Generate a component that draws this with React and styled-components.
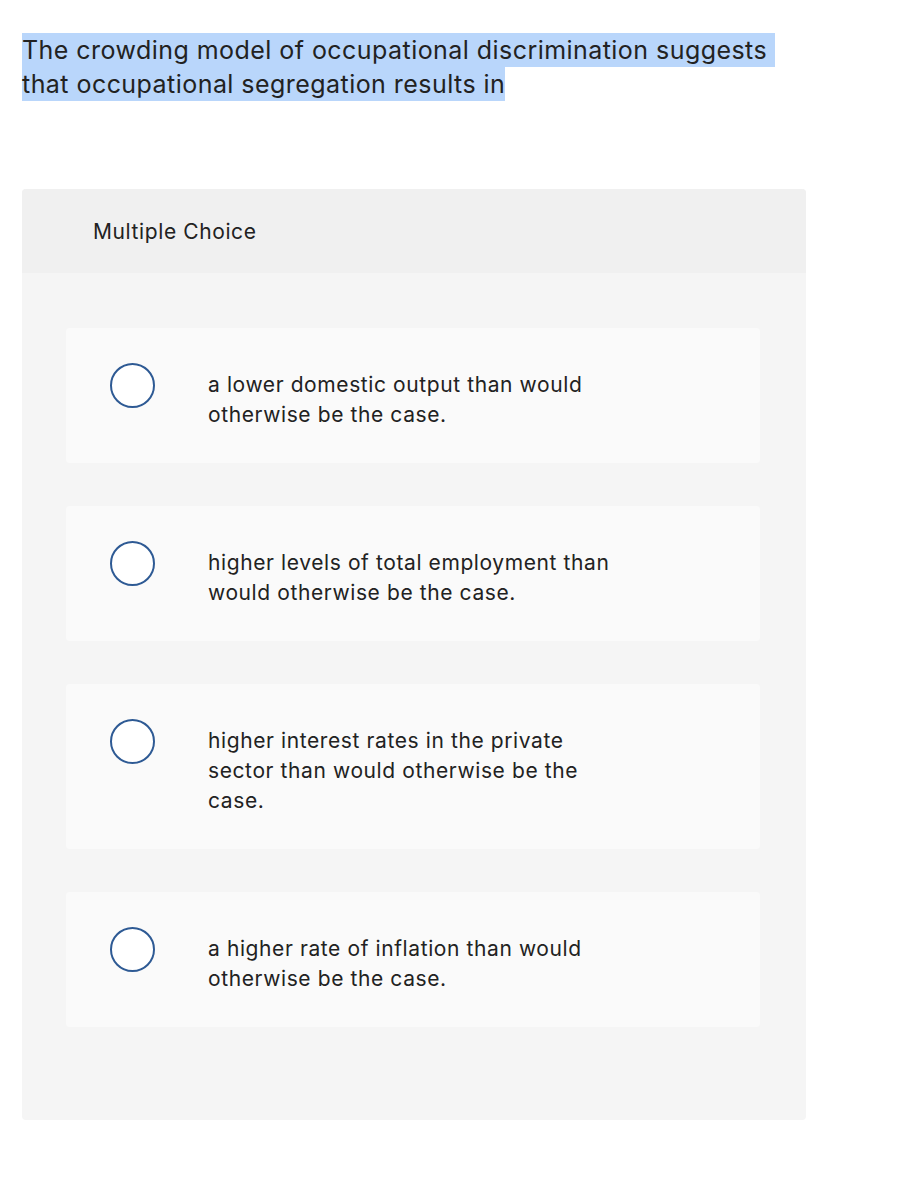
import React, { useEffect, useRef } from "react";
import styled, { createGlobalStyle } from "styled-components";

const Global = createGlobalStyle`
  html, body { margin: 0; padding: 0; background: #ffffff; }
  body { font-family: Inter, "Open Sans", sans-serif; color: #222222; }
  ::selection { background: #b9d6fb; color: #222222; }
`;

const Page = styled.div`
  width: 906px;
  padding: 33px 0 66px 22px;
  box-sizing: border-box;
`;

const Question = styled.div`
  width: 784px;
  font-size: 25px;
  letter-spacing: 0.45px;
  line-height: 34px;
  color: #222222;
  margin: 0 0 88px 0;
`;

const Card = styled.section`
  width: 784px;
  background: #f5f5f5;
  border-radius: 4px;
  overflow: hidden;
  padding-bottom: 93px;
`;

const CardHeader = styled.header`
  height: 84px;
  background: #f0f0f0;
  display: flex;
  align-items: center;
  padding-left: 71px;
  font-size: 21px;
  letter-spacing: 0.6px;
  color: #222222;
`;

const Options = styled.div`
  display: flex;
  flex-direction: column;
  gap: 43px;
  padding: 55px 46px 0 44px;
`;

const Option = styled.label`
  display: flex;
  align-items: flex-start;
  background: #fafafa;
  border-radius: 4px;
  padding: 35px 0 33px 44px;
  cursor: pointer;
`;

const Radio = styled.span`
  flex: none;
  width: 45px;
  height: 45px;
  box-sizing: border-box;
  border: 2px solid #2e5a94;
  border-radius: 50%;
  background: #ffffff;
`;

const OptionText = styled.span`
  margin-left: 53px;
  margin-top: 7px;
  width: 410px;
  font-size: 21px;
  letter-spacing: 0.6px;
  line-height: 30px;
  color: #222222;
`;

const options = [
  "a lower domestic output than would otherwise be the case.",
  "higher levels of total employment than would otherwise be the case.",
  "higher interest rates in the private sector than would otherwise be the case.",
  "a higher rate of inflation than would otherwise be the case.",
];

export default function App() {
  const qRef = useRef(null);
  useEffect(() => {
    const sel = window.getSelection();
    if (sel && qRef.current) {
      sel.removeAllRanges();
      const range = document.createRange();
      range.selectNodeContents(qRef.current);
      sel.addRange(range);
    }
  }, []);
  return (
    <>
      <Global />
      <Page>
        <Question ref={qRef}>
          The crowding model of occupational discrimination suggests that occupational segregation results in
        </Question>
        <Card>
          <CardHeader>Multiple Choice</CardHeader>
          <Options>
            {options.map((t) => (
              <Option key={t}>
                <Radio />
                <OptionText>{t}</OptionText>
              </Option>
            ))}
          </Options>
        </Card>
      </Page>
    </>
  );
}
